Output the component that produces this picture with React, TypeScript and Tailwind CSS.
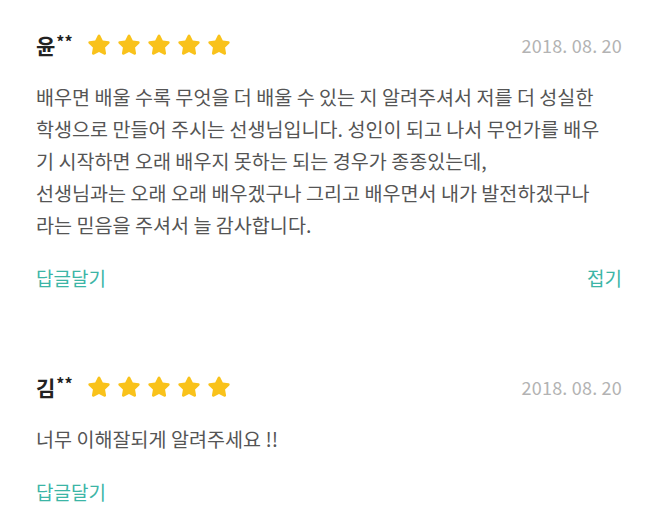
import React from 'react';

type Review = {
  name: string;
  date: string;
  lines: string[];
  collapsible?: boolean;
};

const reviews: Review[] = [
  {
    name: '윤',
    date: '2018. 08. 20',
    lines: [
      '배우면 배울 수록 무엇을 더 배울 수 있는 지 알려주셔서 저를 더 성실한',
      '학생으로 만들어 주시는 선생님입니다. 성인이 되고 나서 무언가를 배우',
      '기 시작하면 오래 배우지 못하는 되는 경우가 종종있는데,',
      '선생님과는 오래 오래 배우겠구나 그리고 배우면서 내가 발전하겠구나',
      '라는 믿음을 주셔서 늘 감사합니다.',
    ],
    collapsible: true,
  },
  {
    name: '김',
    date: '2018. 08. 20',
    lines: ['너무 이해잘되게 알려주세요 !!'],
  },
];

const Star = () => (
  <svg viewBox="0 0 24 24" className="w-[26px] h-[26px]">
    <path
      d="M12 2.2c.5 0 .9.3 1.1.7l2.4 4.9 5.4.8c.9.1 1.3 1.3.6 1.9l-3.9 3.8.9 5.4c.2.9-.8 1.6-1.6 1.2L12 18.4l-4.9 2.5c-.8.4-1.8-.3-1.6-1.2l.9-5.4-3.9-3.8c-.7-.6-.3-1.8.6-1.9l5.4-.8 2.4-4.9c.2-.4.6-.7 1.1-.7z"
      fill="#f9c21b"
    />
  </svg>
);

const ReviewItem = ({ review }: { review: Review }) => (
  <div>
    <div className="flex items-center h-[24px]">
      <span className="text-[21px] font-bold text-[#222] leading-none">
        {review.name}
        <span className="text-[16px] relative -top-[6px] ml-[1px]">**</span>
      </span>
      <div className="flex gap-[4px] ml-[13px]">
        {[0, 1, 2, 3, 4].map((i) => (
          <Star key={i} />
        ))}
      </div>
      <span className="ml-auto text-[18px] text-[#b3b3b3] tracking-[0.2px]">{review.date}</span>
    </div>

    <div className="mt-[24px] text-[19.6px] leading-[32px] text-[#555] whitespace-nowrap">
      {review.lines.map((l, i) => (
        <div key={i}>{l}</div>
      ))}
    </div>

    <div className="mt-[23px] flex items-center justify-between h-[28px] text-[19px] text-[#3cb5a6]">
      <span>답글달기</span>
      {review.collapsible && <span>접기</span>}
    </div>
  </div>
);

const App: React.FC = () => {
  return (
    <div
      className="w-[652px] h-[520px] bg-white overflow-hidden px-[30px] pt-[33px]"
      style={{ fontFamily: '"Noto Sans CJK KR", "Noto Sans", sans-serif' }}
    >
      <div className="pl-[6px]">
        <ReviewItem review={reviews[0]} />
        <div className="h-[83px]" />
        <ReviewItem review={reviews[1]} />
      </div>
    </div>
  );
};

export default App;
